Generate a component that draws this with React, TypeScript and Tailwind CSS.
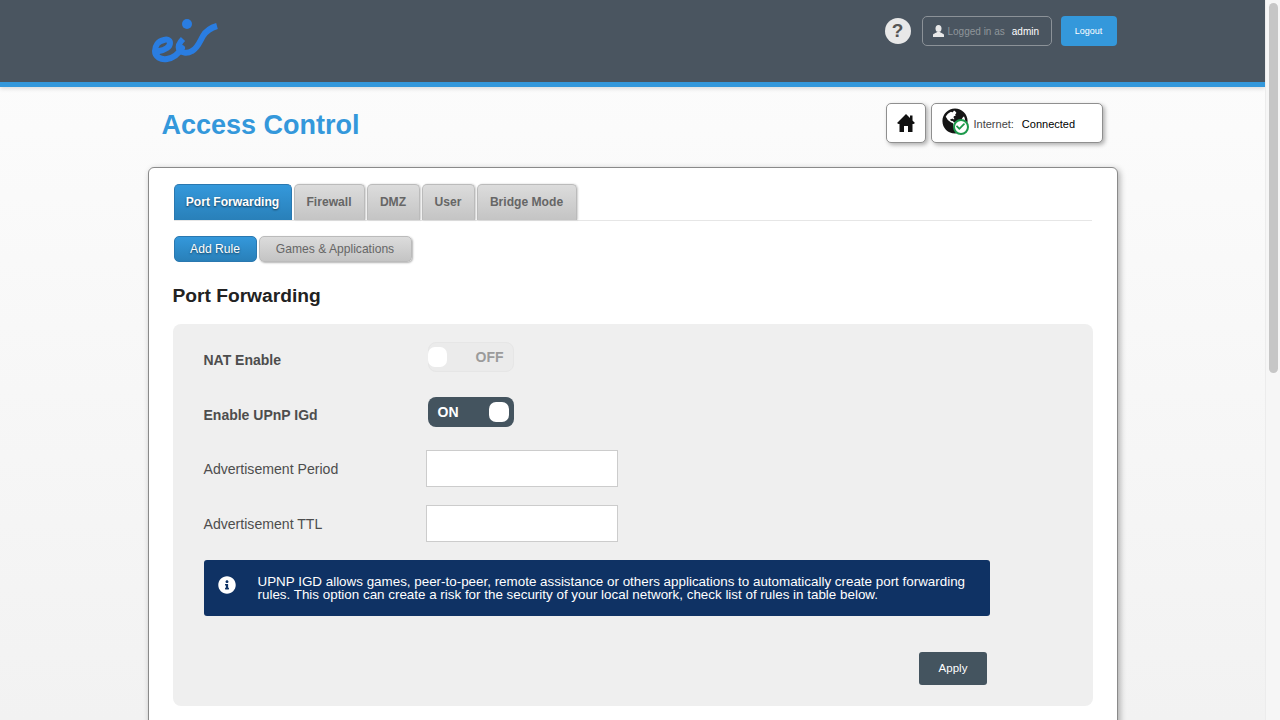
import type { ReactNode } from "react";
import { FaInfoCircle, FaGlobeAmericas, FaCheck } from "react-icons/fa";

const font = "font-['Liberation_Sans',Arial,sans-serif]";

function Logo() {
  return (
    <svg width="70" height="50" viewBox="0 0 70 50" fill="none" className="block">
      <path
        d="M9 35 C15 34 20 31 20 27 C20 24 17 23 14 24 C8 25 5 30 5 35 C5 41 11 44 17 43 C24 42 29 37 32 32"
        stroke="#2a7de1"
        strokeWidth="6"
        strokeLinecap="round"
      />
      <path
        d="M33 23 C30 26 28 30 29 33 C31 37 37 38 42 35 C48 32 50 25 53 20 C56 15 60 12 67 10"
        stroke="#2a7de1"
        strokeWidth="6"
      />
      <circle cx="37" cy="8" r="5" fill="#2a7de1" />
    </svg>
  );
}

function UserIcon() {
  return (
    <svg width="11" height="12" viewBox="0 0 11 12" fill="#e8e8e8" className="block">
      <ellipse cx="5.500" cy="3.500" rx="3" ry="3.500" />
      <path d="M0 12 V10 C0 8.500 3 8.200 4 7 H7 C8 8.200 11 8.500 11 10 V12 Z" />
    </svg>
  );
}

function HomeIcon() {
  return (
    <svg width="18" height="18" viewBox="0 0 18 18" fill="#111" className="block">
      <path d="M9 0 L13 4 V1.500 H15.500 V6.500 L18 9 L16.500 10 H15.500 V18 H11 V12 H7 V18 H2.500 V10 H1.500 L0 9 Z" />
    </svg>
  );
}

function Header() {
  return (
    <div className="relative h-[87px] shrink-0 bg-[#4a5560] border-b-[5px] border-[#3498db] shadow-[0_2px_4px_rgba(0,0,0,0.12)]">
      <div className="mx-auto w-[970px] h-[82px] flex items-start">
        <div className="ml-[2px] mt-[16px]">
          <Logo />
        </div>
        <div className="ml-auto flex items-start mt-[16px]">
          <div className="w-[26px] h-[26px] mt-[2px] rounded-full bg-[#e8e8e8] text-[#555] flex items-center justify-center text-[19px] font-bold">
            ?
          </div>
          <div className="ml-[11px] w-[130px] h-[30px] rounded-[5px] border border-[#8c9298] flex items-center pl-[10px] text-[10px]">
            <UserIcon />
            <span className="ml-[4px] pt-[1px] text-[#8f959b]">Logged in as</span>
            <span className="ml-[7px] pt-[1px] text-white">admin</span>
          </div>
          <button className="ml-[9px] w-[56px] h-[30px] pt-[2px] rounded-[4px] bg-[#3498db] text-white text-[9px]">
            Logout
          </button>
          <div className="w-[1px]" />
        </div>
      </div>
    </div>
  );
}

function TitleRow() {
  return (
    <div className="mx-auto w-[970px] h-[80px] shrink-0 flex items-start">
      <h1 className="ml-[14px] mt-[22px] text-[27px] leading-[32px] font-bold text-[#3498db]">Access Control</h1>
      <div className="ml-auto mr-[15px] mt-[16px] flex gap-[5px]">
        <div className="w-[40px] h-[40px] rounded-[5px] border border-[#8f8f8f] bg-white shadow-[2px_2px_4px_rgba(0,0,0,0.3)] flex items-center justify-center">
          <HomeIcon />
        </div>
        <div className="w-[172px] h-[40px] rounded-[5px] border border-[#8f8f8f] bg-white shadow-[2px_2px_4px_rgba(0,0,0,0.3)] flex items-center pl-[10px] text-[11px]">
          <div className="relative w-[26px] h-[26px] -mt-[5px]">
            <FaGlobeAmericas className="text-[#151515] text-[26px]" />
            <div className="absolute right-[-1px] bottom-[-1px] w-[16px] h-[16px] rounded-full bg-white border-2 border-[#1d9a4b] flex items-center justify-center">
              <FaCheck className="text-[#1d9a4b] text-[9px]" />
            </div>
          </div>
          <span className="ml-[6px] pt-[2px] text-[#444]">Internet:</span>
          <span className="ml-[8px] pt-[2px] text-black">Connected</span>
        </div>
      </div>
    </div>
  );
}

function Tab({ label, active, w }: { label: string; active?: boolean; w: string }) {
  return (
    <div
      className={
        active
          ? `${w} h-[36px] rounded-t-[5px] border border-[#2a78b0] border-b-0 bg-gradient-to-b from-[#3498db] to-[#2980b9] text-white text-[12.100px] font-bold flex items-center justify-center [text-shadow:0_1px_2px_rgba(0,0,0,0.6)]`
          : `${w} h-[36px] rounded-t-[5px] border border-[#bbb] border-b-0 bg-gradient-to-b from-[#dcdcdc] to-[#c4c4c4] text-[#666] text-[12.100px] font-bold flex items-center justify-center shadow-[1px_0_2px_rgba(0,0,0,0.2)]`
      }
    >
      {label}
    </div>
  );
}

function Switch({ on }: { on: boolean }) {
  if (on) {
    return (
      <div className="mt-[1px] w-[86px] h-[30px] rounded-[8px] bg-[#44545f] flex items-center justify-between pl-[10px] pr-[5px]">
        <span className="text-white text-[14px] font-bold">ON</span>
        <div className="w-[20px] h-[20px] rounded-[7px] bg-white" />
      </div>
    );
  }
  return (
    <div className="mt-[1px] w-[86px] h-[30px] rounded-[8px] bg-[#ebebeb] border border-[#e6e6e6] flex items-center justify-between pr-[9px]">
      <div className="-ml-[1px] w-[19px] h-[20px] rounded-[7px] bg-white" />
      <span className="text-[#9b9b9b] text-[14px] font-bold">OFF</span>
    </div>
  );
}

function Row({ label, bold, children }: { label: string; bold?: boolean; children: ReactNode }) {
  return (
    <div className="flex items-start h-[37px]">
      <div className={`w-[224px] self-center text-[#4d4d4d] ${bold ? "text-[14px] font-bold pt-[2px]" : "text-[14.100px]"}`}>
        {label}
      </div>
      {children}
    </div>
  );
}

function Card() {
  return (
    <div className="mx-auto w-[970px] h-[900px] shrink-0 rounded-[6px] border border-[#8a8a8a] bg-white shadow-[2px_2px_6px_rgba(0,0,0,0.3)] px-[24px] pt-[16px]">
      <div className="mx-[1px] flex gap-[2px] border-b border-[#e6e6e6] h-[37px]">
        <Tab label="Port Forwarding" active w="w-[118px]" />
        <Tab label="Firewall" w="w-[71px]" />
        <Tab label="DMZ" w="w-[53px]" />
        <Tab label="User" w="w-[53px]" />
        <Tab label="Bridge Mode" w="w-[100px]" />
      </div>
      <div className="ml-[1px] flex gap-[2px] mt-[15px]">
        <div className="w-[83px] h-[26px] rounded-[5px] border border-[#2a78b0] bg-gradient-to-b from-[#3498db] to-[#2980b9] text-white text-[12.100px] flex items-center justify-center [text-shadow:0_1px_2px_rgba(0,0,0,0.5)]">
          Add Rule
        </div>
        <div className="w-[153px] h-[26px] rounded-[5px] border border-[#bbb] bg-gradient-to-b from-[#dcdcdc] to-[#c4c4c4] text-[#666] text-[12.100px] flex items-center justify-center shadow-[1px_1px_2px_rgba(0,0,0,0.3)]">
          Games &amp; Applications
        </div>
      </div>
      <h2 className="mt-[22px] text-[19.200px] leading-[24px] font-bold text-[#222]">Port Forwarding</h2>
      <div className="mt-[16px] h-[382px] rounded-[8px] bg-[#efefef] pl-[31px] pt-[17px]">
        <div className="flex flex-col gap-[18px]">
          <Row label="NAT Enable" bold><Switch on={false} /></Row>
          <Row label="Enable UPnP IGd" bold><Switch on /></Row>
          <Row label="Advertisement Period">
            <input className="-ml-[2px] -mt-[1px] w-[192px] h-[37px] bg-white border border-[#ccc]" />
          </Row>
          <Row label="Advertisement TTL">
            <input className="-ml-[2px] -mt-[1px] w-[192px] h-[37px] bg-white border border-[#ccc]" />
          </Row>
        </div>
        <div className="mt-[17px] w-[786px] h-[56px] rounded-[3px] bg-[#0f3264] text-white text-[13.400px] leading-[13px] flex pt-[15px]">
          <FaInfoCircle className="ml-[14px] mt-[1px] text-[18px] shrink-0" />
          <p className="ml-[22px] w-[725px]">
            UPNP IGD allows games, peer-to-peer, remote assistance or others applications to automatically create port forwarding rules. This option can create a risk for the security of your local network, check list of rules in table below.
          </p>
        </div>
        <div className="mt-[36px] ml-[715px] w-[68px] h-[33px] pl-[1px] rounded-[3px] bg-[#44545f] text-white text-[11.500px] flex items-center justify-center">
          Apply
        </div>
      </div>
    </div>
  );
}

export default function App() {
  return (
    <div className={`${font} h-screen flex overflow-hidden`}>
      <div className="flex-1 flex flex-col overflow-hidden bg-gradient-to-b from-[#fdfdfd] to-[#f2f2f2]">
        <Header />
        <TitleRow />
        <Card />
      </div>
      <div className="w-[15px] shrink-0 bg-[#f6f6f6] border-l border-[#ececec] pl-[3px] pt-[3px]">
        <div className="w-[9px] h-[370px] rounded-full bg-[#c6c6c6]" />
      </div>
    </div>
  );
}
